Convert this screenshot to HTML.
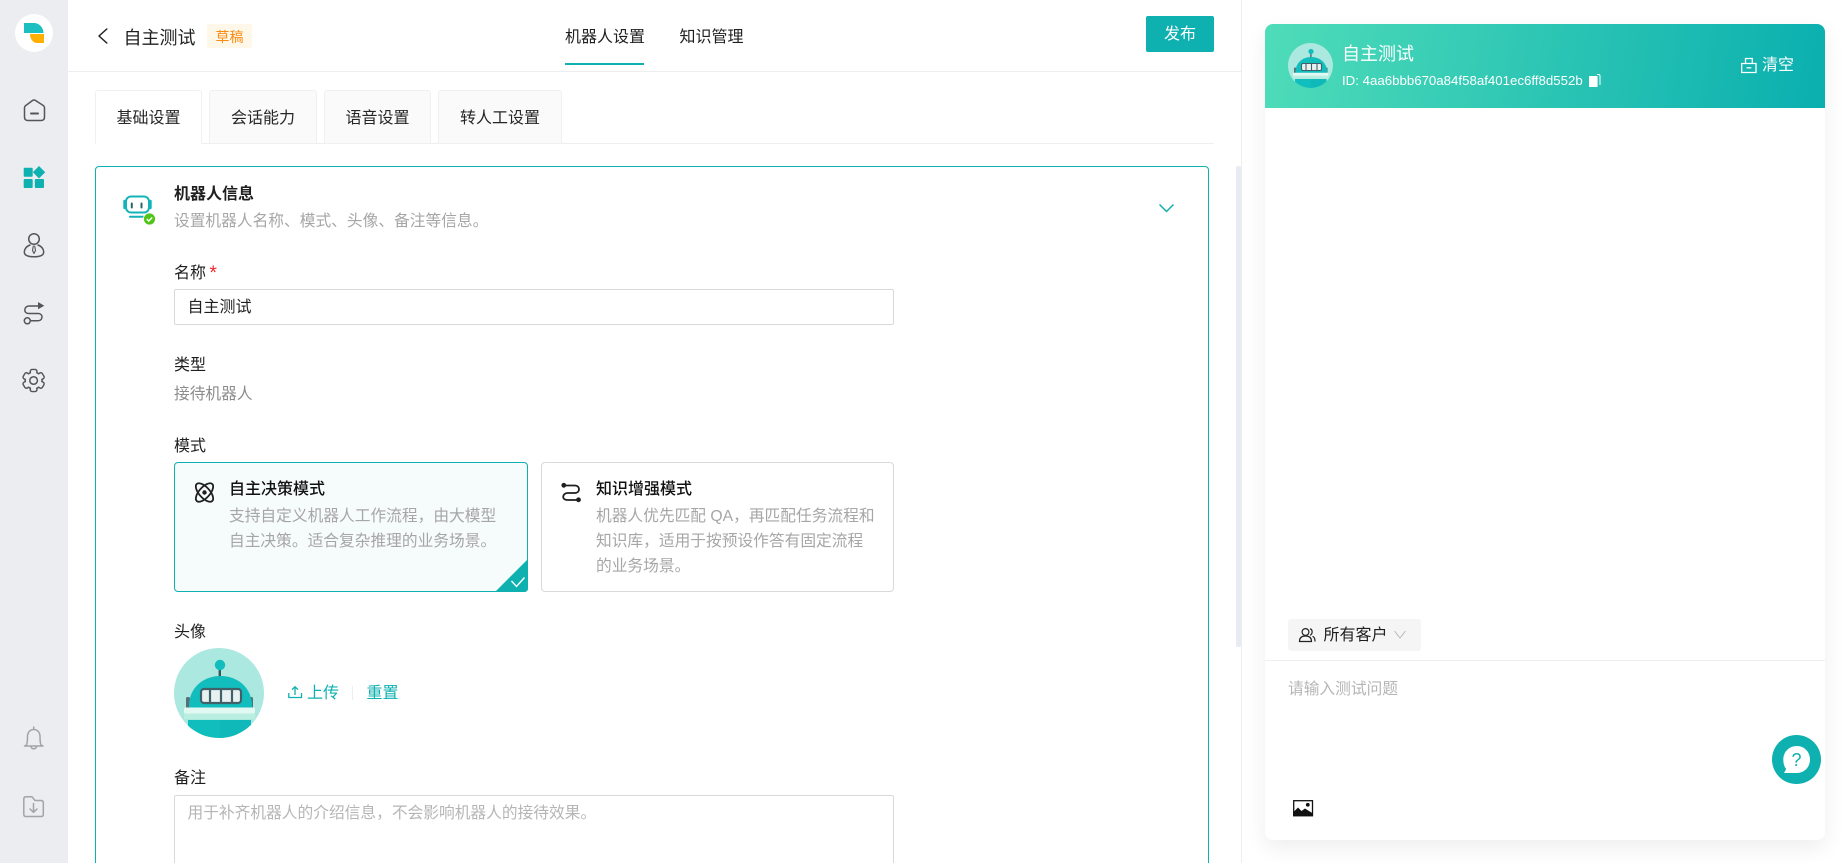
<!DOCTYPE html>
<html lang="zh-CN">
<head>
<meta charset="utf-8">
<title>自主测试</title>
<style>
html,body{margin:0;padding:0;width:1848px;height:863px;overflow:hidden;background:#fff}
body{position:relative;font-family:"Liberation Sans","Noto Sans CJK SC",sans-serif;font-size:16px;color:#1f1f1f}
.a{position:absolute;box-sizing:border-box}
.t{position:absolute;white-space:nowrap;line-height:24px;height:24px;font-size:16px;margin-top:1.5px}
.tab{position:absolute;top:90px;height:54px;box-sizing:border-box;border:1px solid #f0f0f0;border-radius:3px 3px 0 0;background:#fafafa;line-height:56px;text-align:center;font-size:16px;color:#262626}
.g{color:#a6a6a6;font-size:15.72px}
.k{color:#8c8c8c}
.teal{color:#0eb0b0}
svg.o{position:absolute;left:0;top:0;z-index:5}
</style>
</head>
<body>
<!-- sidebar -->
<div class="a" style="left:0;top:0;width:68px;height:863px;background:#ebedf1"></div>
<div class="a" style="left:15px;top:14px;width:38px;height:38px;border-radius:50%;background:#fff"></div>

<!-- header -->
<div class="a" style="left:68px;top:71px;width:1174px;height:1px;background:#eeeeee"></div>
<div class="t" style="left:123.500px;top:23.500px;font-size:18px;line-height:26px;height:26px">自主测试</div>
<div class="a" style="left:207px;top:24px;width:45px;height:24px;background:#fff8e9;border-radius:2px;color:#fa8c16;font-size:14px;line-height:27px;text-align:center">草稿</div>
<div class="t" style="left:565px;top:24.500px">机器人设置</div>
<div class="a" style="left:565px;top:63px;width:79px;height:2px;background:#0eb0b0"></div>
<div class="t" style="left:679.500px;top:24.500px">知识管理</div>
<div class="a" style="left:1146px;top:16px;width:68px;height:36px;background:#0eb0b0;border-radius:2px;color:#fff;text-align:center;line-height:38px;font-size:16px">发布</div>

<!-- tabs -->
<div class="a" style="left:95px;top:143px;width:1119px;height:1px;background:#eeeeee"></div>
<div class="tab" style="left:95px;width:107px;background:#fff;border-bottom-color:#fff">基础设置</div>
<div class="tab" style="left:209px;width:108px">会话能力</div>
<div class="tab" style="left:324px;width:107px">语音设置</div>
<div class="tab" style="left:438px;width:124px">转人工设置</div>

<!-- main card -->
<div class="a" style="left:95px;top:166px;width:1114px;height:697px;border:1px solid #0eb0b0;border-bottom:0;border-radius:4px 4px 0 0"></div>
<div class="t" style="left:174px;top:181px;font-weight:700;color:#1f1f1f">机器人信息</div>
<div class="t g" style="left:174px;top:208.500px">设置机器人名称、模式、头像、备注等信息。</div>

<div class="t" style="left:174px;top:260.500px">名称</div>
<div class="t" style="left:209.500px;top:260px;color:#f5222d;font-size:19px">*</div>
<div class="a" style="left:174px;top:289px;width:720px;height:36px;border:1px solid #d9d9d9;border-radius:2px"></div>
<div class="t" style="left:187.500px;top:294.500px">自主测试</div>

<div class="t" style="left:174px;top:352px">类型</div>
<div class="t k" style="left:174px;top:381px;font-size:15.72px">接待机器人</div>

<div class="t" style="left:174px;top:433.500px">模式</div>
<div class="a" style="left:174px;top:462px;width:354px;height:130px;border:1px solid #0eb0b0;border-radius:4px;background:#f6fbfb"></div>
<div class="t" style="left:229px;top:476px;font-weight:500;color:#111">自主决策模式</div>
<div class="a g" style="left:229px;top:505px;line-height:24.800px;white-space:nowrap">支持自定义机器人工作流程，由大模型<br>自主决策。适合复杂推理的业务场景。</div>

<div class="a" style="left:541px;top:462px;width:353px;height:130px;border:1px solid #d9d9d9;border-radius:4px;background:#fff"></div>
<div class="t" style="left:596px;top:476px;font-weight:500;color:#111">知识增强模式</div>
<div class="a g" style="left:596px;top:505px;line-height:24.800px;white-space:nowrap">机器人优先匹配 QA，再匹配任务流程和<br>知识库，适用于按预设作答有固定流程<br>的业务场景。</div>

<div class="t" style="left:174px;top:619px">头像</div>
<div class="t teal" style="left:307px;top:680.500px">上传</div>
<div class="a" style="left:352px;top:686px;width:1px;height:14px;background:#eeeeee"></div>
<div class="t teal" style="left:366.500px;top:680.500px">重置</div>

<div class="t" style="left:174px;top:765px">备注</div>
<div class="a" style="left:174px;top:795px;width:720px;height:68px;border:1px solid #d9d9d9;border-bottom:0;border-radius:2px 2px 0 0"></div>
<div class="t g" style="left:187.500px;top:800px;color:#b5b5b5">用于补齐机器人的介绍信息，不会影响机器人的接待效果。</div>

<!-- scrollbar + divider -->
<div class="a" style="left:1236px;top:166px;width:5px;height:481px;background:#e6ebf4;border-radius:2px"></div>
<div class="a" style="left:1241px;top:0;width:1px;height:863px;background:#eeeeee"></div>

<!-- right panel -->
<div class="a" style="left:1265px;top:24px;width:560px;height:816px;background:#fff;border-radius:8px;box-shadow:0 8px 22px rgba(0,0,0,.07)"></div>
<div class="a" style="left:1265px;top:24px;width:560px;height:84px;border-radius:8px 8px 0 0;background:linear-gradient(100deg,#4fdcb9 0%,#0aafaf 100%)"></div>
<div class="t" style="left:1342px;top:39px;font-size:18px;line-height:26px;height:26px;color:#fff">自主测试</div>
<div class="t" style="left:1342px;top:69px;margin-top:0;font-size:13.250px;color:#fff">ID: 4aa6bbb670a84f58af401ec6ff8d552b</div>
<div class="t" style="left:1762px;top:53.500px;margin-top:0;color:#fff">清空</div>

<div class="a" style="left:1288px;top:619px;width:133px;height:32px;background:#f5f5f5;border-radius:3px"></div>
<div class="t" style="left:1323.500px;top:622.500px">所有客户</div>
<div class="a" style="left:1265px;top:660px;width:560px;height:1px;background:#eeeeee"></div>
<div class="t g" style="left:1288px;top:676.500px;color:#b5b5b5">请输入测试问题</div>

<!-- all icons -->
<svg class="o" width="1848" height="863" viewBox="0 0 1848 863" xmlns="http://www.w3.org/2000/svg">
<defs>
  <clipPath id="cp"><circle cx="45" cy="45" r="45"/></clipPath>
  <g id="bot" clip-path="url(#cp)">
    <rect width="90" height="90" fill="#abe8e0"/>
    <rect x="44.600" y="20" width="2.400" height="10" fill="#37555c"/>
    <circle cx="46" cy="17" r="5.200" fill="#12bdbd"/>
    <rect x="12" y="49" width="4" height="11" rx="1.500" fill="#5a6f75"/>
    <rect x="75" y="49" width="4" height="11" rx="1.500" fill="#5a6f75"/>
    <path d="M15 61 V58 C15 40 29 28 46.500 28 C64 28 78 40 78 58 V61Z" fill="#12bdbd"/>
    <rect x="27" y="41" width="40" height="14" rx="3" fill="#e8f1ef" stroke="#41616a" stroke-width="2.200"/>
    <path d="M36 41 V55 M47 41 V55 M58 41 V55" stroke="#41616a" stroke-width="2.200"/>
    <rect x="10" y="59.500" width="71" height="6" rx="1.500" fill="#e2f8f2"/>
    <rect x="10" y="65.500" width="71" height="5.500" fill="#b9eee1"/>
    <rect x="14" y="72" width="63" height="20" fill="#10bebe"/>
    <rect x="46" y="72" width="31" height="20" fill="#0fb9b9"/>
  </g>
</defs>

<!-- logo -->
<path d="M24 23 H34 C39.500 23 43.500 28 43.500 33 H24Z" fill="#1bbfc0"/>
<path d="M30 34 H44 V43 H37 C33 43 30 39 30 34Z" fill="#ffb000"/>

<!-- sidebar icons -->
<g fill="none" stroke="#555" stroke-width="1.500" stroke-linejoin="round" stroke-linecap="round">
  <path d="M24.500 108 Q24.500 106 26.500 105 L32.500 100.500 Q34 99.500 35.500 100.500 L42.500 105 Q44.500 106 44.500 108 V117 Q44.500 120.500 41 120.500 H28 Q24.500 120.500 24.500 117Z"/>
  <path d="M31 113.500 H38" stroke-width="2"/>
  <circle cx="34" cy="239" r="5.300"/>
  <path d="M30 245 C26 246.500 24.300 249.500 24.300 252 C24.300 255.500 28 256.800 34 256.800 C40 256.800 43.700 255.500 43.700 252 C43.700 249.500 42 246.500 38 245"/>
  <path d="M33.300 246 L32.500 250.500 L34 253.500 L35.500 250.500 L34.700 246" stroke-width="1.100"/>
  <path d="M38 306 H29 C26.500 306 24.800 307.800 24.800 310 C24.800 312.200 26.500 313.500 29 313.500 H38 C40.500 313.500 42 315 42 317 C42 319 40.500 320.800 38 320.800 H31"/>
  <circle cx="27.300" cy="320.800" r="3"/>
</g>
<path d="M38 302 L44.300 305.700 L38 309.300Z" fill="#555"/>
<g fill="#0eb0b0">
  <rect x="23.700" y="167.700" width="9" height="9" rx="1"/>
  <rect x="23.700" y="179" width="9" height="9" rx="1"/>
  <rect x="34.800" y="179" width="9.200" height="9" rx="1"/>
  <path d="M39 166 L45.200 172.200 L39 178.400 L32.800 172.200Z"/>
</g>
<!-- gear -->
<g transform="translate(33.600 380.500)">
  <g fill="#ebedf1" stroke="#555" stroke-width="1.500">
    <rect x="-3.300" y="-11" width="6.600" height="22" rx="1.800"/>
    <rect x="-3.300" y="-11" width="6.600" height="22" rx="1.800" transform="rotate(60)"/>
    <rect x="-3.300" y="-11" width="6.600" height="22" rx="1.800" transform="rotate(120)"/>
    <circle r="8.400"/>
  </g>
  <g fill="#ebedf1">
    <rect x="-2.550" y="-10.250" width="5.100" height="20.500" rx="1.200"/>
    <rect x="-2.550" y="-10.250" width="5.100" height="20.500" rx="1.200" transform="rotate(60)"/>
    <rect x="-2.550" y="-10.250" width="5.100" height="20.500" rx="1.200" transform="rotate(120)"/>
  </g>
  <circle r="3.800" fill="none" stroke="#555" stroke-width="1.500"/>
</g>
<!-- bell + folder -->
<g fill="none" stroke="#a3a3a8" stroke-width="1.500" stroke-linecap="round" stroke-linejoin="round">
  <path d="M33.700 727 V729.500 M26.500 745 C27.500 742.500 27.500 740 27.500 736.500 C27.500 732.500 30 729.500 33.700 729.500 C37.500 729.500 40 732.500 40 736.500 C40 740 40 742.500 41 745 L43 746 H24.500Z"/>
  <path d="M31 746.500 C31.500 749.500 36 749.500 36.500 746.500"/>
  <path d="M23.800 799 Q23.800 796.800 26 796.800 H32 L35 800.500 H41 Q43.300 800.500 43.300 802.500 V814.500 Q43.300 816.500 41 816.500 H26 Q23.800 816.500 23.800 814.500Z"/>
  <path d="M33.500 803.500 V812 M30 809 L33.500 812.300 L37 809"/>
</g>

<!-- back -->
<path d="M106.800 29 L99 36 L106.800 43" fill="none" stroke="#222" stroke-width="1.500" stroke-linecap="round" stroke-linejoin="round"/>

<!-- card robot icon -->
<g fill="none" stroke="#12b4b8" stroke-width="2" stroke-linecap="round">
  <rect x="126" y="196.500" width="23" height="16" rx="5"/>
  <path d="M124.500 201 V208 M150.500 201 V208" stroke-width="2.400"/>
  <path d="M130 216.800 H144"/>
</g>
<path d="M131.800 203.500 V207.500 M141.500 203.500 V207.500" stroke="#27656b" stroke-width="2" stroke-linecap="round"/>
<circle cx="149.500" cy="219" r="6.500" fill="#fff"/>
<circle cx="149.500" cy="219" r="5.600" fill="#52c41a"/>
<path d="M146.800 219 L148.800 221 L152.200 217.500" fill="none" stroke="#fff" stroke-width="1.400"/>

<!-- card chevron -->
<path d="M1159.500 204.500 L1166.500 211.500 L1173.500 204.500" fill="none" stroke="#0eb0b0" stroke-width="1.500"/>

<!-- mode icon 1 -->
<g fill="none" stroke="#1f1f1f" stroke-width="1.800">
  <ellipse cx="204.500" cy="492.500" rx="11.500" ry="5.300" transform="rotate(48 204.500 492.500)"/>
  <ellipse cx="204.500" cy="492.500" rx="11.500" ry="5.300" transform="rotate(-48 204.500 492.500)"/>
</g>
<circle cx="204.500" cy="492.500" r="2.200" fill="#1f1f1f"/>
<!-- mode icon 2 -->
<path d="M563.500 485.500 H575 C577.500 485.500 579 487.300 579 489.300 C579 491.300 577.500 493 575 493 H567.500 C565 493 563.200 494.800 563.200 496.800 C563.200 498.800 565 500 567.500 500 H578" fill="none" stroke="#1f1f1f" stroke-width="1.800"/>
<circle cx="563.800" cy="485.300" r="2.400" fill="#1f1f1f"/>
<circle cx="578.500" cy="499.800" r="2.400" fill="#1f1f1f"/>

<!-- selected corner -->
<path d="M528 559 V588 Q528 592 524 592 H495Z" fill="#0eb0b0"/>
<path d="M511.500 581 L516.500 586.500 L524.500 577.500" fill="none" stroke="#fff" stroke-width="1.400"/>

<!-- avatar -->
<use href="#bot" transform="translate(174 648)"/>

<!-- upload -->
<path d="M295 695 V686.800 M292 689.600 L295 686.800 L298 689.600 M288.800 693 V697.500 H301.500 V693" fill="none" stroke="#0eb0b0" stroke-width="1.300"/>

<!-- header avatar -->
<use href="#bot" transform="translate(1288 43) scale(.5)"/>

<!-- copy -->
<path d="M1597 74.500 H1598.500 Q1600 74.500 1600 76 V85" fill="none" stroke="#fff" stroke-width="1"/>
<rect x="1589" y="76" width="8.600" height="11" rx=".8" fill="#fff"/>

<!-- clear -->
<g fill="none" stroke="#fff" stroke-width="1.300">
  <path d="M1741.700 63.500 H1756 V72.500 H1741.700Z"/>
  <path d="M1745.500 63.500 V58.500 H1752.300 V63.500"/>
  <path d="M1746.500 67.800 H1751.300"/>
</g>

<!-- users -->
<g fill="none" stroke="#222" stroke-width="1.200" stroke-linecap="round">
  <circle cx="1305.500" cy="632" r="3.400"/>
  <path d="M1299.500 641.500 C1299.500 637.500 1302 636 1305.500 636 C1309 636 1311.500 637.500 1311.500 641.500 Z"/>
  <path d="M1310.500 629 C1312.500 629.500 1312.800 633.800 1310.500 635 M1313 636.500 C1314.500 637.500 1315 639 1315 641"/>
</g>
<path d="M1394.500 631 L1400 638 L1405.500 631" fill="none" stroke="#b8b8b8" stroke-width="1"/>

<!-- image -->
<rect x="1293.700" y="800.700" width="18.800" height="15" fill="#fff" stroke="#111" stroke-width="1.300"/>
<path d="M1293 816.300 V812.500 L1298 807.500 L1301.500 811 L1305 808.500 L1313 813.500 V816.300Z" fill="#111"/>
<circle cx="1307.800" cy="804.800" r="1.900" fill="#111"/>

<!-- help -->
<circle cx="1796.500" cy="759.500" r="24.500" fill="#0eb0b0"/>
<path d="M1796.800 746 C1804.500 746 1810 752 1810 759.500 C1810 767 1804.500 773 1796.800 773 H1784 L1786.200 769 C1784 766.500 1783.300 763 1783.300 759.500 C1783.300 752 1789 746 1796.800 746Z" fill="#fff"/>
<text x="1796.500" y="766" text-anchor="middle" font-family="Liberation Sans, sans-serif" font-size="18" fill="#0eb0b0">?</text>
</svg>
</body>
</html>
